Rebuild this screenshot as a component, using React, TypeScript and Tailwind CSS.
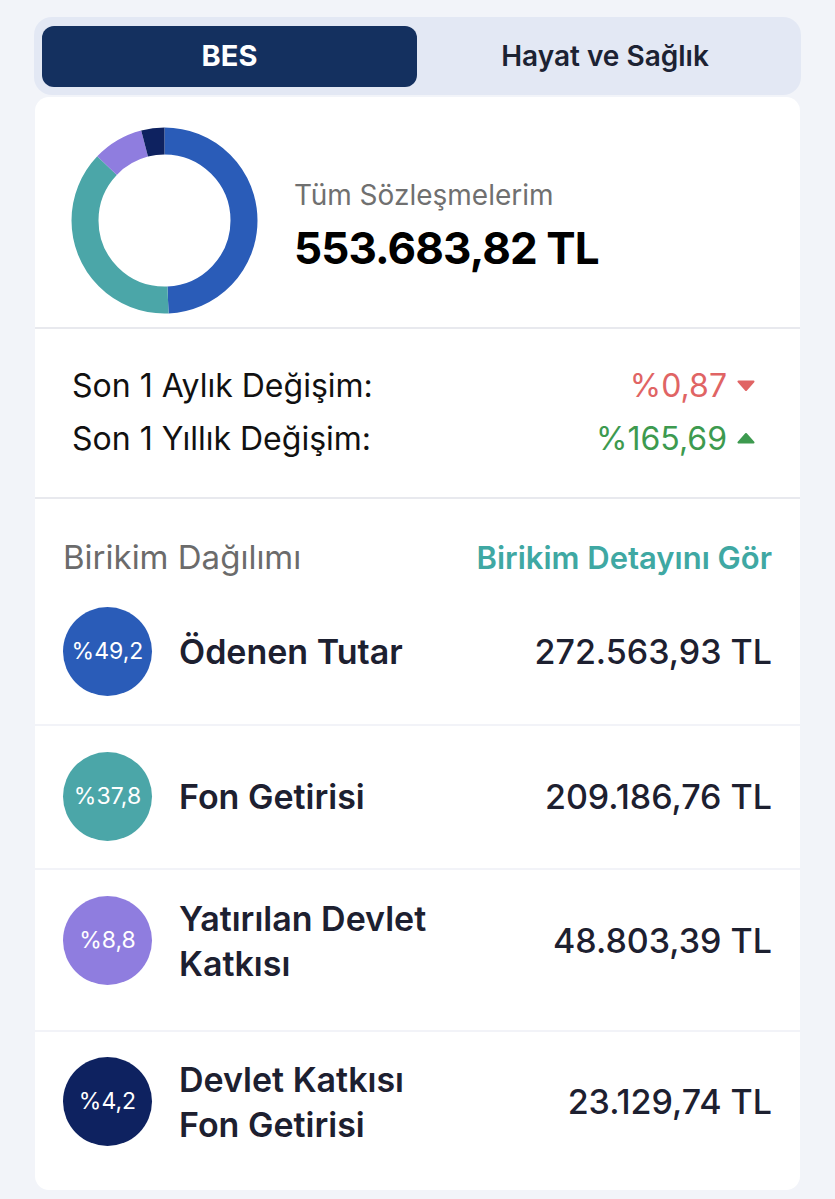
import React from "react";

const segments = [
  { pct: 49.2, color: "#2a5cb8" },
  { pct: 37.8, color: "#4ba6a8" },
  { pct: 8.8, color: "#8f7ddf" },
  { pct: 4.2, color: "#0e2260" },
];

function Donut() {
  const r = 79.5;
  const c = 2 * Math.PI * r;
  let acc = 0;
  return (
    <svg width="187" height="187" viewBox="0 0 187 187" className="shrink-0">
      <g transform="rotate(-90 93.5 93.5)">
        {segments.map((s, i) => {
          const len = (s.pct / 100) * c;
          const el = (
            <circle
              key={i}
              cx="93.5"
              cy="93.5"
              r={r}
              fill="none"
              stroke={s.color}
              strokeWidth="27"
              strokeDasharray={`${len} ${c - len}`}
              strokeDashoffset={-acc}
            />
          );
          acc += len;
          return el;
        })}
      </g>
    </svg>
  );
}

type Row = { pct: string; color: string; label: string[]; amount: string; pad: string };

const rows: Row[] = [
  { pct: "%49,2", color: "bg-[#2a5cb8]", label: ["Ödenen Tutar"], amount: "272.563,93 TL", pad: "pt-[31px] pb-[28px]" },
  { pct: "%37,8", color: "bg-[#4ba6a8]", label: ["Fon Getirisi"], amount: "209.186,76 TL", pad: "pt-[26px] pb-[27px]" },
  { pct: "%8,8", color: "bg-[#8f7ddf]", label: ["Yatırılan Devlet", "Katkısı"], amount: "48.803,39 TL", pad: "pt-[26px] pb-[45px]" },
  { pct: "%4,2", color: "bg-[#0e2260]", label: ["Devlet Katkısı", "Fon Getirisi"], amount: "23.129,74 TL", pad: "pt-[25px] pb-[44px]" },
];

function Item({ row }: { row: Row }) {
  return (
    <div className={`flex items-start bg-white px-7 ${row.pad}`}>
      <div className={`flex h-[89px] w-[89px] shrink-0 items-center justify-center rounded-full ${row.color}`}>
        <span className="text-[23px] leading-none text-white">{row.pct}</span>
      </div>
      <div className="ml-[27px] flex h-[89px] flex-1 flex-col justify-center">
        {row.label.map((l, i) => (
          <div key={i} className="text-[34px] font-semibold leading-[45px] text-[#1d2030]">
            {l}
          </div>
        ))}
      </div>
      <div className="flex h-[89px] items-center text-[34px] font-medium text-[#1d2030]">
        {row.amount}
      </div>
    </div>
  );
}

export default function App() {
  return (
    <div
      className="h-[1199px] w-[835px] overflow-hidden bg-[#f2f4f9] pt-[17px]"
      style={{ fontFamily: "Inter, 'Noto Sans', sans-serif" }}
    >
      <div className="mx-[34px] flex h-[78px] items-center rounded-[18px] bg-[#e3e8f4] px-[8px]">
        <div className="flex h-[61px] w-[375px] items-center justify-center rounded-[12px] bg-[#14305f] text-[29px] font-bold text-white">
          BES
        </div>
        <div className="flex flex-1 items-center justify-center text-[28px] font-semibold text-[#1c2233]">
          Hayat ve Sağlık
        </div>
      </div>

      <div className="ml-[35px] mr-[35px] mt-[2px] overflow-hidden rounded-[14px] bg-[#f2f3f8]">
        <div className="flex items-center bg-white pb-[13px] pl-[36px] pt-[30px]">
          <Donut />
          <div className="ml-[36px] mt-[12px] flex flex-col">
            <div className="text-[28px] leading-[34px] text-[#707070]">Tüm Sözleşmelerim</div>
            <div className="mt-[9px] text-[44px] font-bold leading-[54px] tracking-[-0.02em] text-black">
              553.683,82 TL
            </div>
          </div>
        </div>
        <div className="h-[2px] bg-[#e8e9ee]" />
        <div className="bg-white pb-[32px] pl-[37px] pr-[45px] pt-[30px]">
          <div className="flex h-[53px] items-center justify-between">
            <span className="text-[32px] text-[#111]">Son 1 Aylık Değişim:</span>
            <span className="flex items-center text-[32px] text-[#e06464]">
              %0,87
              <svg width="18" height="11" viewBox="0 0 18 11" className="ml-[10px]">
                <path d="M1.5 1.5 H16.5 L9 10 Z" fill="#e06464" stroke="#e06464" strokeWidth="2" strokeLinejoin="round" />
              </svg>
            </span>
          </div>
          <div className="flex h-[53px] items-center justify-between">
            <span className="text-[32px] text-[#111]">Son 1 Yıllık Değişim:</span>
            <span className="flex items-center text-[32px] text-[#3d9a4f]">
              %165,69
              <svg width="18" height="11" viewBox="0 0 18 11" className="ml-[10px]">
                <path d="M1.5 9.5 H16.5 L9 1 Z" fill="#3d9a4f" stroke="#3d9a4f" strokeWidth="2" strokeLinejoin="round" />
              </svg>
            </span>
          </div>
        </div>
        <div className="h-[2px] bg-[#e8e9ee]" />
        <div className="bg-white px-7 pt-[41px]">
          <div className="flex h-[36px] items-center justify-between">
            <span className="text-[33px] text-[#6b6b6b]">Birikim Dağılımı</span>
            <span className="text-[31px] font-semibold text-[#3fa8a3]">Birikim Detayını Gör</span>
          </div>
        </div>
        <div className="flex flex-col gap-[2px]">
          {rows.map((r, i) => (
            <Item key={i} row={r} />
          ))}
        </div>
      </div>
    </div>
  );
}
